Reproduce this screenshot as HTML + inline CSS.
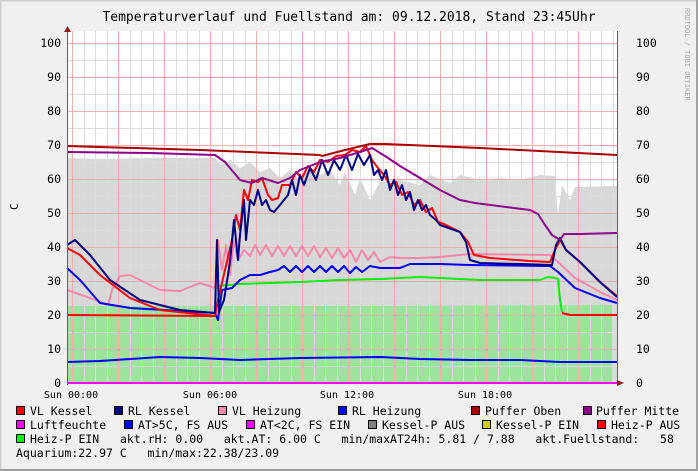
<!DOCTYPE html>
<html><head><meta charset="utf-8"><style>
html,body{margin:0;padding:0;background:#f0f0f0;}
svg{display:block}
text{font-family:"DejaVu Sans Mono","Liberation Mono",monospace;}
</style></head><body>
<svg width="698" height="471" viewBox="0 0 698 471" xmlns="http://www.w3.org/2000/svg">
<rect x="0" y="0" width="698" height="471" fill="#f0f0f0"/>
<rect x="0.5" y="0.5" width="697" height="470" fill="none" stroke="#cfcfcf" stroke-width="2"/>
<line x1="0" y1="470" x2="698" y2="470" stroke="#a0a0a0" stroke-width="2"/>
<line x1="697" y1="0" x2="697" y2="471" stroke="#a0a0a0" stroke-width="2"/>
<text x="349" y="21" font-size="13" text-anchor="middle" fill="#000">Temperaturverlauf und Fuellstand am: 09.12.2018, Stand 23:45Uhr</text>
<text transform="translate(685,8) rotate(90)" font-size="7" fill="#aaa">RRDTOOL / TOBI OETIKER</text>
<text transform="translate(18,210) rotate(-90)" font-size="11" fill="#000">C</text>
<rect x="67" y="31" width="550" height="352" fill="#fff"/>
<!-- areas -->
<polygon fill="#d8d8d8" points="67,383 67,158 100,159 150,158 215,158 222,165 230,160 240,168 250,162 260,172 270,168 280,178 290,170 300,180 310,168 320,175 330,170 340,185 345,172 355,195 360,178 370,200 380,182 400,180 420,185 430,175 450,183 460,175 480,180 500,178 520,180 540,175 555,176 558,215 562,185 570,200 575,187 617,186 617,383"/>
<polygon fill="#9de29d" points="67,383 67,306 200,306 400,306 612,305 612,383"/>
<!-- grid -->
<g stroke="#dcdcdc" stroke-width="1">
<path d="M67,366.5H617M67,349.5H617M67,332.5H617M67,315.5H617M67,298.5H617M67,281.5H617M67,264.5H617M67,247.5H617M67,230.5H617M67,213.5H617M67,196.5H617M67,179.5H617M67,162.5H617M67,145.5H617M67,128.5H617M67,111.5H617M67,94.5H617M67,77.5H617M67,60.5H617M67,43.5H617"/>
<path d="M84.5,31V383M95.5,31V383M107.5,31V383M130.5,31V383M141.5,31V383M153.5,31V383M176.5,31V383M187.5,31V383M199.5,31V383M222.5,31V383M233.5,31V383M245.5,31V383M268.5,31V383M279.5,31V383M291.5,31V383M314.5,31V383M325.5,31V383M337.5,31V383M360.5,31V383M371.5,31V383M383.5,31V383M406.5,31V383M417.5,31V383M429.5,31V383M452.5,31V383M463.5,31V383M475.5,31V383M498.5,31V383M509.5,31V383M521.5,31V383M544.5,31V383M555.5,31V383M567.5,31V383M590.5,31V383M601.5,31V383M613.5,31V383"/>
</g>
<g stroke="#f2b0b0" stroke-width="1">
<path d="M67,366.5H617M67,349.5H617M67,332.5H617M67,315.5H617M67,298.5H617M67,281.5H617M67,264.5H617M67,247.5H617M67,230.5H617M67,213.5H617M67,196.5H617M67,179.5H617M67,162.5H617M67,145.5H617M67,128.5H617M67,111.5H617M67,94.5H617M67,77.5H617M67,60.5H617M67,43.5H617" stroke-opacity="0"/>
<path d="M67,349.5H617M67,315.5H617M67,281.5H617M67,247.5H617M67,213.5H617M67,179.5H617M67,145.5H617M67,111.5H617M67,77.5H617M67,43.5H617"/>
<path d="M72.5,31V383M118.5,31V383M164.5,31V383M210.5,31V383M256.5,31V383M302.5,31V383M348.5,31V383M394.5,31V383M440.5,31V383M486.5,31V383M532.5,31V383M578.5,31V383"/>
</g>
<!-- lines -->
<g fill="none" stroke-width="2" stroke-linejoin="round">
<polyline stroke="#0000ff" points="67,362 100,361 160,357 200,358 240,360 300,358 380,357 420,359 470,360 520,360 560,362 617,362"/>
<polyline stroke="#ff0000" points="67,315 215,316"/>
<polyline stroke="#ff0000" points="562,313 570,315 617,315"/>
<polyline stroke="#00ee00" points="218,286 240,284 300,282 340,280 380,279 420,277 460,279 480,280 540,280 548,277 555,278 558,279 560,300 562,312"/>
<polyline stroke="#ff88aa" points="67,290 90,298 108,305 112,290 120,276 130,275 160,290 180,291 200,283 215,288 218,240 222,270 226,245 230,275 234,240 238,260 244,250 250,256 255,245 260,255 266,245 272,256 278,246 284,256 290,246 296,256 302,246 308,256 314,246 320,257 326,248 332,258 338,248 344,258 350,250 356,262 362,250 368,260 374,252 380,262 390,257 400,258 420,258 440,257 470,254 550,255 558,262 575,278 600,292 617,300"/>
<polyline stroke="#0000ff" points="67,268 80,280 100,303 130,308 215,313 218,320 222,290 232,288 240,280 250,275 260,275 270,272 278,270 284,266 290,272 296,266 302,272 308,266 314,272 320,266 326,272 332,266 338,272 344,266 350,273 356,267 362,272 370,266 380,268 400,268 410,264 440,264 470,265 550,266 558,272 575,288 600,298 617,303"/>
<polyline stroke="#ff0000" points="67,248 80,255 100,275 130,298 160,310 215,316 218,300 225,270 232,240 236,215 240,230 244,190 248,200 252,180 258,182 262,178 268,195 272,200 278,198 282,185 290,185 296,172 302,178 308,166 314,172 320,160 328,162 336,156 345,155 352,150 360,152 366,146 372,160 378,168 384,175 390,185 396,182 402,195 408,192 414,205 420,200 426,212 432,208 438,222 444,224 460,232 468,242 474,255 490,258 530,261 550,262 555,250 560,240 566,250 580,262 600,282 617,296"/>
<polyline stroke="#000080" points="67,245 75,240 90,255 110,280 140,300 180,310 215,313 217,240 219,312 224,300 230,262 234,220 238,260 240,235 244,200 246,240 250,200 254,205 258,190 262,205 266,200 270,210 274,212 280,205 284,200 288,195 292,180 296,195 300,175 304,185 310,168 316,180 322,160 328,175 334,160 340,170 346,155 352,170 358,154 364,165 370,155 374,175 378,170 382,180 386,170 390,190 394,180 398,195 402,185 406,200 410,192 414,210 418,200 422,210 426,205 430,215 436,220 440,225 460,232 466,242 470,260 480,263 520,264 552,265 556,245 560,238 566,250 580,262 600,282 617,297"/>
<polyline stroke="#8b008b" points="67,152 150,153 215,155 225,162 240,180 252,183 262,178 278,183 290,178 300,170 320,162 340,158 360,152 372,148 385,156 400,166 420,178 440,190 460,200 475,203 530,210 538,214 545,225 552,235 560,240 564,234 580,234 617,233"/>
<polyline stroke="#aa0000" points="67,146 200,150 320,155 322,156 345,150 370,144 385,144 480,148 617,155"/>
<line x1="67" y1="383" x2="617" y2="383" stroke="#ff00ff"/>
</g>
<!-- axes -->
<line x1="67.5" y1="27" x2="67.5" y2="385" stroke="#606060"/>
<polygon points="64,32 71,32 67.5,26" fill="#902020"/>
<line x1="617.5" y1="31" x2="617.5" y2="383" stroke="#606060"/>
<polygon points="617,380 617,386 624,383" fill="#902020"/>
<g font-size="11.5" fill="#000" text-anchor="end">
<text x="61" y="47">100</text><text x="61" y="81">90</text><text x="61" y="115">80</text><text x="61" y="149">70</text><text x="61" y="183">60</text><text x="61" y="217">50</text><text x="61" y="251">40</text><text x="61" y="285">30</text><text x="61" y="319">20</text><text x="61" y="353">10</text><text x="61" y="387">0</text>
</g>
<g font-size="11.5" fill="#000">
<text x="636" y="47">100</text><text x="636" y="81">90</text><text x="636" y="115">80</text><text x="636" y="149">70</text><text x="636" y="183">60</text><text x="636" y="217">50</text><text x="636" y="251">40</text><text x="636" y="285">30</text><text x="636" y="319">20</text><text x="636" y="353">10</text><text x="636" y="387">0</text>
</g>
<g font-size="10" fill="#000" text-anchor="middle">
<text x="71" y="398">Sun 00:00</text><text x="210" y="398">Sun 06:00</text><text x="347" y="398">Sun 12:00</text><text x="485" y="398">Sun 18:00</text>
</g>
<!-- legend -->
<g stroke="#000" stroke-width="1">
<rect x="16.5" y="406.5" width="8" height="8" fill="#ff0000"/>
<rect x="114.5" y="406.5" width="8" height="8" fill="#000080"/>
<rect x="218.5" y="406.5" width="8" height="8" fill="#ff88aa"/>
<rect x="338.5" y="406.5" width="8" height="8" fill="#0000ff"/>
<rect x="471.5" y="406.5" width="8" height="8" fill="#aa0000"/>
<rect x="583.5" y="406.5" width="8" height="8" fill="#8b008b"/>
<rect x="16.5" y="420.5" width="8" height="8" fill="#ff00ff"/>
<rect x="124.5" y="420.5" width="8" height="8" fill="#0000ff"/>
<rect x="246.5" y="420.5" width="8" height="8" fill="#ff00ff"/>
<rect x="368.5" y="420.5" width="8" height="8" fill="#808080"/>
<rect x="482.5" y="420.5" width="8" height="8" fill="#cccc00"/>
<rect x="597.5" y="420.5" width="8" height="8" fill="#ff0000"/>
<rect x="16.5" y="434.5" width="8" height="8" fill="#00ff00"/>
</g>
<g font-size="11.5" fill="#000">
<text x="30" y="415">VL Kessel</text><text x="128" y="415">RL Kessel</text><text x="232" y="415">VL Heizung</text><text x="352" y="415">RL Heizung</text><text x="485" y="415">Puffer Oben</text><text x="596" y="415">Puffer Mitte</text>
<text x="30" y="429">Luftfeuchte</text><text x="138" y="429">AT&gt;5C, FS AUS</text><text x="260" y="429">AT&lt;2C, FS EIN</text><text x="382" y="429">Kessel-P AUS</text><text x="496" y="429">Kessel-P EIN</text><text x="611" y="429">Heiz-P AUS</text>
<text x="30" y="443" xml:space="preserve">Heiz-P EIN   akt.rH: 0.00   akt.AT: 6.00 C   min/maxAT24h: 5.81 / 7.88   akt.Fuellstand:   58</text>
<text x="16" y="457" xml:space="preserve">Aquarium:22.97 C   min/max:22.38/23.09</text>
</g>
</svg>
</body></html>
